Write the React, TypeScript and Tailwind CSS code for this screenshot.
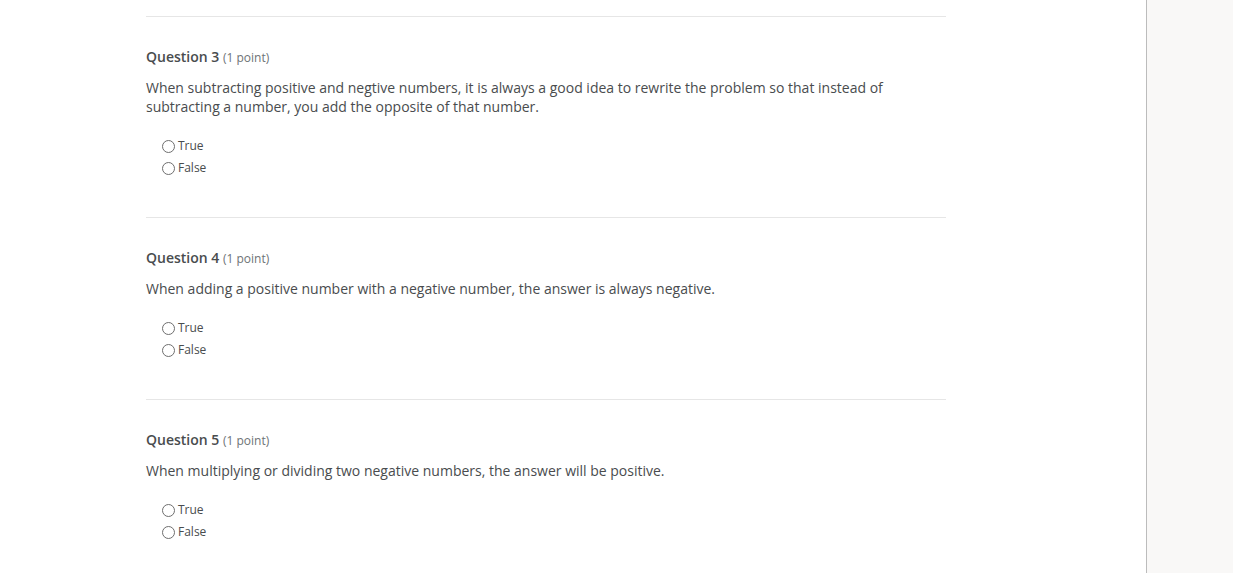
import React from "react";

interface QuestionProps {
  num: number;
  text: string;
}

function Radio({ label }: { label: string }) {
  return (
    <label className="flex items-center h-[22px] text-[12px] text-[#494c4e]">
      <span className="w-[13px] h-[13px] rounded-full border border-[#6e6e6e] bg-white mr-[3px]" />
      <span>{label}</span>
    </label>
  );
}

function Question({ num, text }: QuestionProps) {
  return (
    <div className="border-t border-[#e6e6e6] pt-[30px] pb-[38px]">
      <h3 className="text-[14px] leading-[20px] font-semibold text-[#494c4e]">
        Question {num} <span className="text-[12px] font-normal text-[#6e7376]">(1 point)</span>
      </h3>
      <p className="mt-[10px] text-[14px] leading-[19px] text-[#494c4e] max-w-[760px]">{text}</p>
      <div className="mt-[19px] pl-[16px] flex flex-col">
        <Radio label="True" />
        <Radio label="False" />
      </div>
    </div>
  );
}

const questions = [
  {
    num: 3,
    text: "When subtracting positive and negtive numbers, it is always a good idea to rewrite the problem so that instead of subtracting a number, you add the opposite of that number.",
  },
  { num: 4, text: "When adding a positive number with a negative number, the answer is always negative." },
  { num: 5, text: "When multiplying or dividing two negative numbers, the answer will be positive." },
];

export default function App() {
  return (
    <div className="flex h-[573px] overflow-hidden bg-white" style={{ fontFamily: "'Open Sans', sans-serif" }}>
      <main className="w-[1146px] shrink-0 pl-[146px] pt-[16px]">
        <div className="w-[800px]">
          {questions.map((q) => (
            <Question key={q.num} num={q.num} text={q.text} />
          ))}
        </div>
      </main>
      <aside className="flex-1 border-l border-[#bcbcbc] bg-[#f9f8f7]" />
    </div>
  );
}
